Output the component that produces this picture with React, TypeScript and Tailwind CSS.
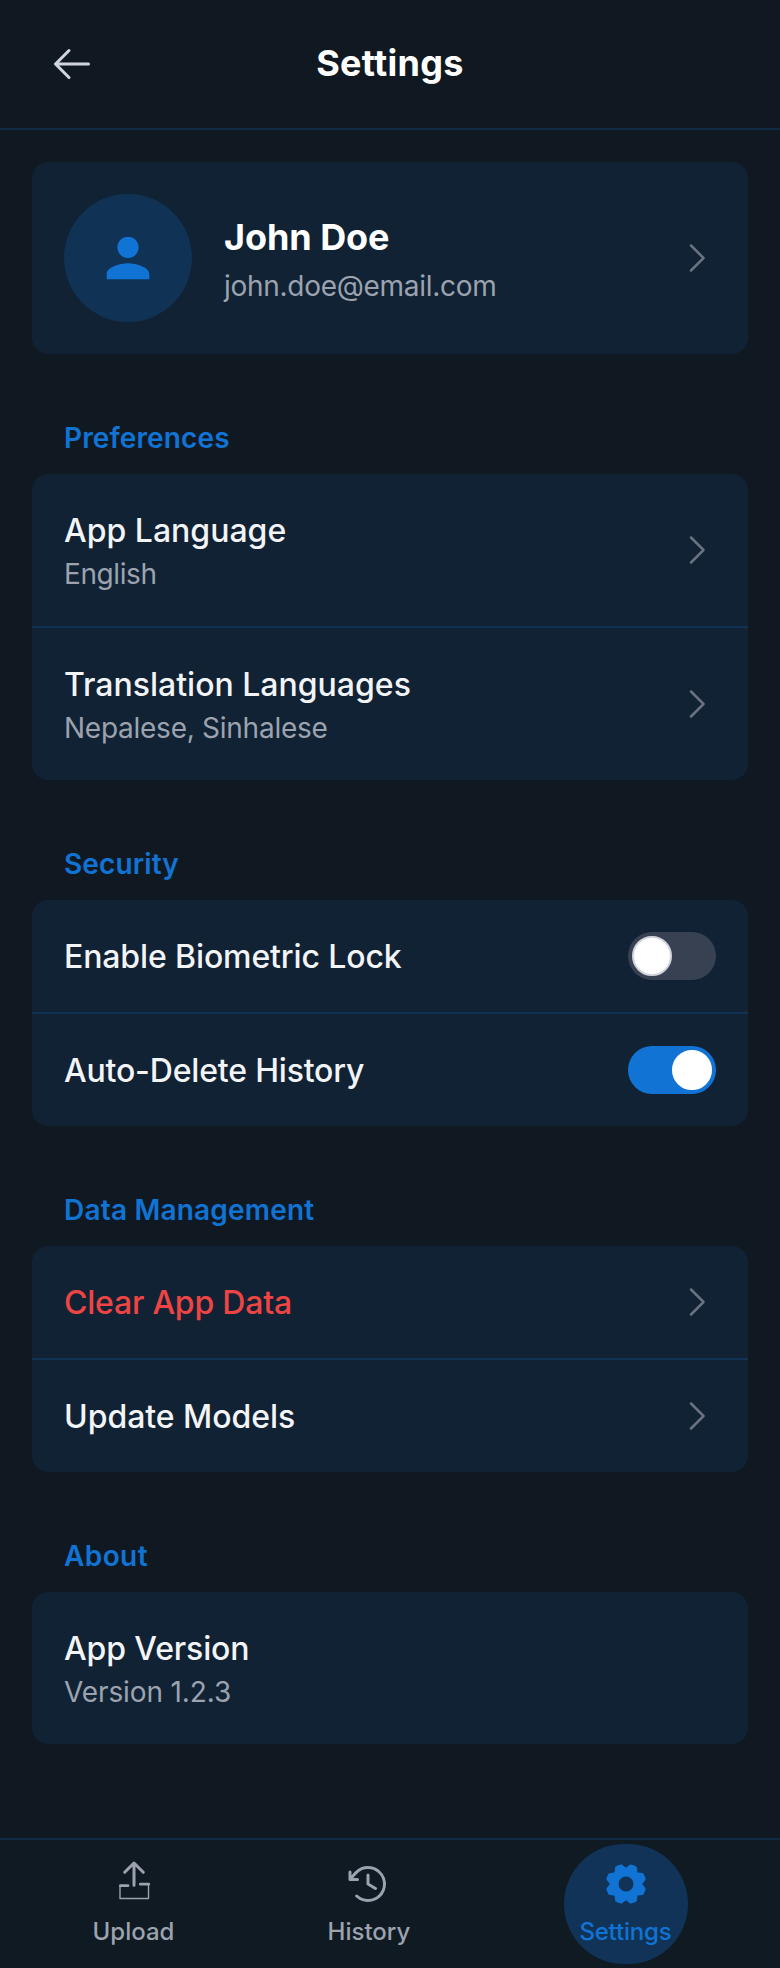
import { PiArrowLeft, PiCaretRight, PiClockCounterClockwise, PiGearFill } from 'react-icons/pi';
import type { ReactNode } from 'react';

function Chevron() {
  return <PiCaretRight className="size-5 shrink-0 text-gray-500" />;
}

function Toggle({ on }: { on: boolean }) {
  return (
    <button
      role="switch"
      aria-checked={on}
      className={`flex h-6 w-11 items-center rounded-full px-0.5 ${on ? 'justify-end bg-[#1173d4]' : 'justify-start bg-[#374151]'}`}
    >
      <span className={`size-5 rounded-full border bg-white ${on ? 'border-white' : 'border-[#d1d5db]'}`} />
    </button>
  );
}

type RowProps = {
  title: string;
  titleClass?: string;
  detail?: string;
  detailClass?: string;
  action?: ReactNode;
};

function Row({ title, titleClass = 'text-[#f3f4f6]', detail, detailClass = '', action }: RowProps) {
  return (
    <div className="flex items-center justify-between p-4">
      <div>
        <p className={`text-base font-medium ${titleClass}`}>{title}</p>
        {detail && <p className={`text-sm text-[#9ca3af] ${detailClass}`}>{detail}</p>}
      </div>
      {action}
    </div>
  );
}

function Section({ title, titleClass, children }: { title: string; titleClass: string; children: ReactNode }) {
  return (
    <section className="mt-8">
      <h2 className={`px-4 pb-2 text-sm font-semibold text-[#1173d4] ${titleClass}`}>{title}</h2>
      <div className="divide-y divide-[#103254] rounded-lg bg-[#102234]">{children}</div>
    </section>
  );
}

function UploadIcon() {
  return (
    <svg className="size-6" viewBox="0 0 48 48" fill="none" stroke="currentColor" strokeLinecap="round" strokeLinejoin="round">
      <path d="M24 25.3V3M14.7 12.3 24 3l9.3 9.3" strokeWidth="3" />
      <path d="M10.5 25.7H18M30.3 24.2H38.8" strokeWidth="2.8" />
      <path d="M10 25.5V38.5H38.5V24.5" strokeWidth="1.4" />
    </svg>
  );
}

export default function App() {
  return (
    <div className="h-[1968px] w-[780px] overflow-hidden bg-[#101922]">
      <div className="flex h-[984px] w-[390px] origin-top-left scale-200 flex-col font-['Inter',sans-serif]">
        <header className="flex h-[65px] shrink-0 items-center border-b border-[#102b46] px-6">
          <PiArrowLeft className="size-6 text-[#d1d5db]" />
          <h1 className="flex-1 pr-6 text-center text-lg font-bold tracking-[0.15px] text-white">Settings</h1>
        </header>

        <main className="flex-1 px-4 pt-4">
          <div className="flex items-center gap-4 rounded-lg bg-[#102234] p-4">
            <div className="flex size-16 items-center justify-center rounded-full bg-[#103254] text-[#1173d4]">
              <svg className="size-8" viewBox="0 0 24 24" fill="currentColor">
                <path d="M12 12c2.21 0 4-1.79 4-4s-1.79-4-4-4-4 1.79-4 4 1.79 4 4 4zm0 2c-2.67 0-8 1.34-8 4v2h16v-2c0-2.66-5.33-4-8-4z" />
              </svg>
            </div>
            <div className="flex-1">
              <p className="text-lg font-bold tracking-[-0.03px] text-white">John Doe</p>
              <p className="text-sm tracking-[-0.14px] text-[#9ca3af]">john.doe@email.com</p>
            </div>
            <Chevron />
          </div>

          <Section title="Preferences" titleClass="tracking-[0.06px]">
            <Row title="App Language" detail="English" detailClass="tracking-[-0.2px]" action={<Chevron />} />
            <Row title="Translation Languages" detail="Nepalese, Sinhalese" detailClass="tracking-[-0.13px]" action={<Chevron />} />
          </Section>
          <Section title="Security" titleClass="tracking-[0.06px]">
            <Row title="Enable Biometric Lock" titleClass="text-[#f3f4f6] tracking-[-0.06px]" action={<Toggle on={false} />} />
            <Row title="Auto-Delete History" titleClass="text-[#f3f4f6] tracking-[-0.09px]" action={<Toggle on />} />
          </Section>
          <Section title="Data Management" titleClass="tracking-[0.1px]">
            <Row title="Clear App Data" titleClass="text-[#ef4444] tracking-[-0.11px]" action={<Chevron />} />
            <Row title="Update Models" titleClass="text-[#f3f4f6] tracking-[-0.02px]" action={<Chevron />} />
          </Section>
          <Section title="About" titleClass="tracking-[0.2px]">
            <Row title="App Version" titleClass="text-[#f3f4f6] tracking-[-0.06px]" detail="Version 1.2.3" detailClass="tracking-[-0.06px]" />
          </Section>
        </main>

        <nav className="flex h-[65px] shrink-0 items-center justify-around border-t border-[#102b46] bg-[#0f1a22] px-2 text-xs font-medium text-[#9ca3af]">
          <a className="flex flex-col items-center gap-1">
            <UploadIcon />
            <span>Upload</span>
          </a>
          <a className="flex flex-col items-center gap-1">
            <PiClockCounterClockwise className="size-6" />
            <span>History</span>
          </a>
          <a className="flex w-[62px] flex-col items-center gap-1 rounded-full bg-[#103357] py-2 text-[#1173d4]">
            <PiGearFill className="size-6" />
            <span className="tracking-[-0.1px]">Settings</span>
          </a>
        </nav>
      </div>
    </div>
  );
}
